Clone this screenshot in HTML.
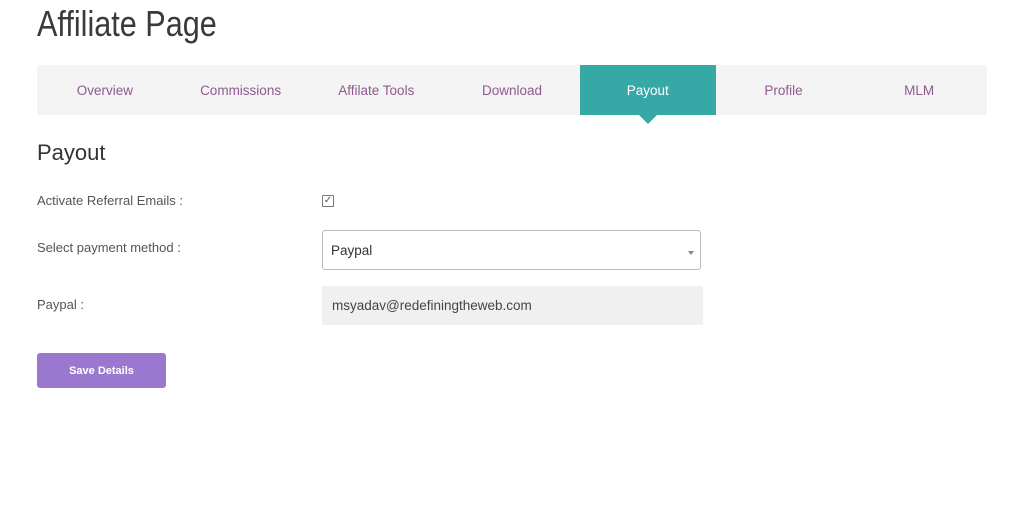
<!DOCTYPE html>
<html><head><style>
body{margin:0;background:#fff;font-family:"Liberation Sans",sans-serif;color:#444;width:1024px;height:509px;overflow:hidden;position:relative}
.a{position:absolute}
h1{position:absolute;left:37px;top:3px;margin:0;font-weight:normal;font-size:36px;color:#3a3a3a;transform:scaleX(0.85);transform-origin:left top;white-space:nowrap}
.nav{left:37px;top:65px;width:950px;height:50px;background:#f4f4f4;display:flex}
.nav div{flex:1;text-align:center;line-height:52px;font-size:13.5px;color:#8e5a8e;position:relative}
.nav .act{background:#36a9a7;color:#fff}
.nav .act:after{content:"";position:absolute;left:50%;margin-left:-9px;top:50px;border-left:9px solid transparent;border-right:9px solid transparent;border-top:9px solid #36a9a7}
.lbl{left:37px;font-size:13px;color:#555}
</style></head><body>
<h1>Affiliate Page</h1>
<div class="a nav"><div>Overview</div><div>Commissions</div><div>Affilate Tools</div><div>Download</div><div class="act">Payout</div><div>Profile</div><div>MLM</div></div>
<div class="a" style="left:37px;top:140px;font-size:22px;color:#333">Payout</div>
<div class="a lbl" style="top:193px">Activate Referral Emails :</div>
<div class="a" style="left:322px;top:195px;width:10px;height:10px;border:1px solid #777;border-radius:1px;font-size:10px;line-height:10px;text-align:center;color:#555">✓</div>
<div class="a lbl" style="top:240px">Select payment method :</div>
<div class="a" style="left:322px;top:230px;width:377px;height:38px;border:1px solid #bbb;border-radius:3px;background:#fff"><span class="a" style="left:8px;top:12px;font-size:13.5px;color:#333">Paypal</span><span class="a" style="right:6px;top:20px;border-left:3px solid transparent;border-right:3px solid transparent;border-top:4px solid #888"></span></div>
<div class="a lbl" style="top:297px">Paypal :</div>
<div class="a" style="left:322px;top:286px;width:381px;height:39px;background:#f0f0f0"><span class="a" style="left:10px;top:12px;font-size:13.5px;color:#444">msyadav@redefiningtheweb.com</span></div>
<div class="a" style="left:37px;top:353px;width:129px;height:35px;background:#9b78d0;border-radius:3px;color:#fff;font-size:11px;font-weight:bold;text-align:center;line-height:36px">Save Details</div>
</body></html>
